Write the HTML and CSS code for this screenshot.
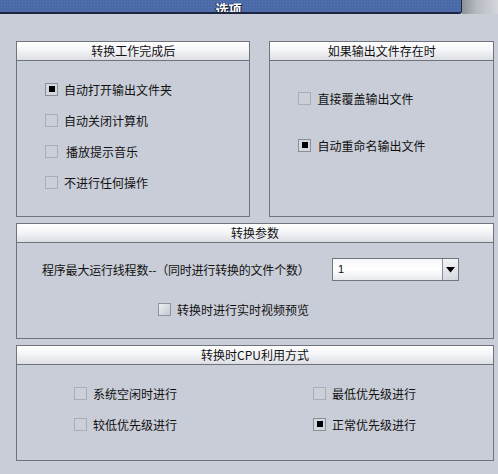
FILE: index.html
```html
<!DOCTYPE html>
<html lang="zh-CN">
<head>
<meta charset="utf-8">
<title>选项</title>
<link rel="stylesheet" href="styles.css">
</head>
<body>
<div class="titlebar">
  <div class="title-main"><span class="title-text">选项</span></div>
  <div class="title-side"></div>
</div>
<div class="content">
  <div class="top-row">
    <section class="panel p1">
      <div class="panel-head">转换工作完成后</div>
      <div class="panel-body list1">
        <label class="opt"><span class="cb checked"></span><span>自动打开输出文件夹</span></label>
        <label class="opt"><span class="cb"></span><span>自动关闭计算机</span></label>
        <label class="opt"><span class="cb"></span><span class="indent">播放提示音乐</span></label>
        <label class="opt"><span class="cb"></span><span>不进行任何操作</span></label>
      </div>
    </section>
    <section class="panel p2">
      <div class="panel-head">如果输出文件存在时</div>
      <div class="panel-body list2">
        <label class="opt"><span class="cb"></span><span>直接覆盖输出文件</span></label>
        <label class="opt"><span class="cb checked"></span><span>自动重命名输出文件</span></label>
      </div>
    </section>
  </div>
  <section class="panel p3">
    <div class="panel-head">转换参数</div>
    <div class="panel-body params">
      <div class="param-row">
        <span class="param-label">程序最大运行线程数--（同时进行转换的文件个数）</span>
        <div class="select"><span class="select-val">1</span><span class="select-btn"><svg width="9" height="6" viewBox="0 0 9 6"><path d="M0 0H9L4.5 5.5Z" fill="#000"/></svg></span></div>
      </div>
      <label class="opt preview"><span class="cb soft"></span><span>转换时进行实时视频预览</span></label>
    </div>
  </section>
  <section class="panel p4">
    <div class="panel-head">转换时CPU利用方式</div>
    <div class="panel-body cpu">
      <label class="opt"><span class="cb"></span><span>系统空闲时进行</span></label>
      <label class="opt"><span class="cb"></span><span>最低优先级进行</span></label>
      <label class="opt"><span class="cb"></span><span>较低优先级进行</span></label>
      <label class="opt"><span class="cb checked"></span><span>正常优先级进行</span></label>
    </div>
  </section>
</div>
</body>
</html>
```

FILE: styles.css
```css
* { box-sizing: border-box; }
html, body {
  margin: 0;
  padding: 0;
  background: #c9cdd7;
  font-family: "Noto Sans CJK SC", "DejaVu Sans", sans-serif;
  font-size: 12px;
  color: #111;
}
.titlebar {
  display: flex;
  height: 14px;
  overflow: hidden;
}
.title-main {
  width: 462px;
  height: 14px;
  background: #4a69a6;
  background-image: radial-gradient(#5878b4 0.6px, transparent 0.7px);
  background-size: 3px 3px;
  border-bottom: 2px solid #1c2640;
  border-right: 1px solid #1c2640;
  border-bottom-right-radius: 3px;
  text-align: center;
  overflow: hidden;
  padding-right: 4px;
}
.title-text {
  display: inline-block;
  margin-top: -4px;
  font-size: 13px;
  line-height: 16px;
  font-weight: bold;
  color: #fff;
  text-shadow: 1px 1px 0 #10182c, -1px 0 0 #10182c;
}
.title-side {
  flex: 1;
  background: linear-gradient(90deg, #8c9098 0%, #b6b9c0 40%, #d4d6dc 100%);
}
.content {
  padding: 27px 4px 0 16px;
  display: flex;
  flex-direction: column;
  gap: 6px;
}
.top-row {
  display: flex;
  gap: 19px;
}
.panel {
  border: 1px solid #6e737c;
  background: #c9cdd7;
}
.p1 { width: 235px; height: 176px; }
.p2 { width: 225px; height: 176px; }
.p3 { height: 116px; }
.p4 { height: 116px; }
.panel-head {
  height: 19px;
  line-height: 18px;
  text-align: center;
  border-bottom: 1px solid #6e737c;
  background: linear-gradient(180deg, #ffffff 0%, #f4f5f7 45%, #dcdee4 100%);
  color: #111;
}
.opt {
  display: flex;
  align-items: center;
  gap: 6px;
  height: 20px;
}
.cb {
  width: 13px;
  height: 13px;
  border: 1px solid #a9adb6;
  background: #cbcfd8;
  display: flex;
  align-items: center;
  justify-content: center;
  flex: none;
}
.cb.checked {
  border-color: #8a8e96;
  background: #d4d7df;
}
.cb.checked::after {
  content: "";
  width: 6px;
  height: 6px;
  background: #000;
}
.cb.soft {
  border-color: #8f939c;
  background: linear-gradient(135deg, #eef0f4 0%, #c3c7d0 100%);
}
.indent { margin-left: 2px; }
.list1 {
  padding: 18px 0 0 28px;
  display: flex;
  flex-direction: column;
  gap: 11px;
}
.list2 {
  padding: 27px 0 0 28px;
  display: flex;
  flex-direction: column;
  gap: 27px;
}
.params {
  padding: 15px 0 0 25px;
}
.param-row {
  display: flex;
  align-items: center;
  height: 23px;
}
.param-label {
  width: 290px;
  letter-spacing: -0.2px;
}
.select {
  width: 127px;
  height: 23px;
  border: 1px solid #70757e;
  display: flex;
  background: linear-gradient(180deg, #f6f7f9 0%, #ffffff 50%, #e8eaef 100%);
}
.select-val {
  flex: 1;
  padding-left: 5px;
  line-height: 21px;
  font-family: "Liberation Sans", sans-serif;
  font-size: 11px;
}
.select-btn {
  width: 16px;
  border-left: 1px solid #8a8e96;
  background: linear-gradient(180deg, #f2f3f6 0%, #d6d9e0 100%);
  display: flex;
  align-items: center;
  justify-content: center;
}
.preview {
  margin: 18px 0 0 116px;
}
.cpu {
  padding: 18px 0 0 57px;
  display: grid;
  grid-template-columns: 239px auto;
  row-gap: 11px;
}
```
